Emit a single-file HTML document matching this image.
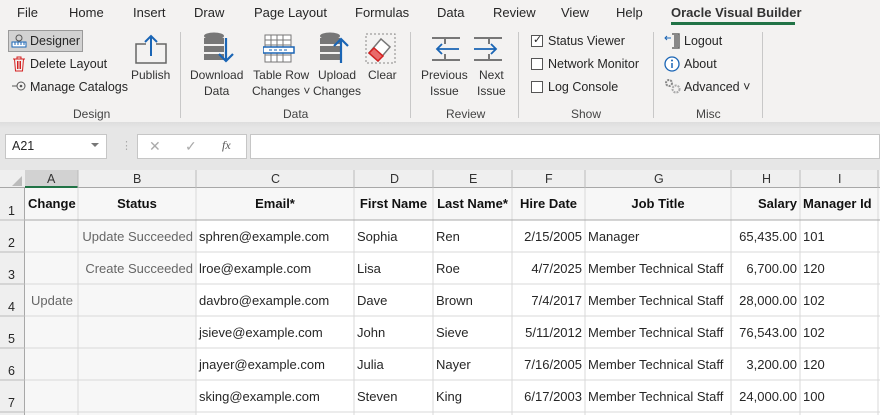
<!DOCTYPE html>
<html><head><meta charset="utf-8"><style>
*{margin:0;padding:0;box-sizing:border-box}
body{width:880px;height:415px;overflow:hidden;background:#e6e6e6;font-family:"Liberation Sans",sans-serif;font-size:12.5px;color:#262626;position:relative}
.a{position:absolute;white-space:nowrap}
.tab{top:5px;font-size:13px;color:#262626}
.lbl{font-size:12px;color:#333;text-align:center;line-height:16px}
.grp{font-size:12px;color:#444;top:107px}
.sep{position:absolute;top:32px;width:1px;height:86px;background:#c8c8c8}
.cb{position:absolute;width:12px;height:12px;border:1px solid #555;background:#fff}
.cell{position:absolute;font-size:13px;line-height:32px;overflow:hidden;white-space:nowrap;padding:0 3px;top:1px}
</style></head><body>
<!-- ribbon -->
<div class="a" style="left:0;top:0;width:880px;height:122px;background:#f3f2f1"></div>
<div class="a" style="left:0;top:122px;width:880px;height:6px;background:linear-gradient(#ddd,#e6e6e6)"></div>
<div class="a tab" style="left:17px">File</div>
<div class="a tab" style="left:69px">Home</div>
<div class="a tab" style="left:133px">Insert</div>
<div class="a tab" style="left:194px">Draw</div>
<div class="a tab" style="left:254px">Page Layout</div>
<div class="a tab" style="left:355px">Formulas</div>
<div class="a tab" style="left:437px">Data</div>
<div class="a tab" style="left:493px">Review</div>
<div class="a tab" style="left:561px">View</div>
<div class="a tab" style="left:616px">Help</div>
<div class="a tab" style="left:671px;font-weight:bold;color:#333">Oracle Visual Builder</div>
<div class="a" style="left:671px;top:22px;width:124px;height:3px;background:#217346"></div>

<!-- Design group -->
<div class="a" style="left:8px;top:30px;width:75px;height:22px;background:#d2d2d2;border:1px solid #9a9a9a"></div>
<svg class="a" style="left:11px;top:33px" width="16" height="16"><circle cx="8" cy="5" r="3" fill="none" stroke="#555"/><rect x="1" y="9" width="14" height="5" fill="#fff" stroke="#1a65b5"/><path d="M4 9v3M7 9v3M10 9v3M13 9v3" stroke="#1a65b5"/></svg>
<div class="a" style="left:30px;top:34px;font-size:12.5px">Designer</div>
<svg class="a" style="left:12px;top:56px" width="14" height="16"><path d="M1 3h12M5 3V1h4v2M2.5 3l1 12h7l1-12M5.5 5v8M7 5v8M8.5 5v8" stroke="#d42020" fill="none"/></svg>
<div class="a" style="left:30px;top:57px">Delete Layout</div>
<svg class="a" style="left:11px;top:80px" width="18" height="12"><circle cx="10" cy="6" r="4" fill="none" stroke="#555"/><circle cx="10" cy="6" r="1.3" fill="#555"/><path d="M1 6h5" stroke="#555"/></svg>
<div class="a" style="left:30px;top:80px">Manage Catalogs</div>
<svg class="a" style="left:135px;top:34px" width="32" height="30"><path d="M11 10H1v19h30V10H21" fill="none" stroke="#666" stroke-width="1.5"/><path d="M16 22V2M10 8l6-6 6 6" fill="none" stroke="#1a65b5" stroke-width="2"/></svg>
<div class="a lbl" style="left:131px;top:67px">Publish</div>
<div class="a grp" style="left:73px">Design</div>
<div class="sep" style="left:180px"></div>

<!-- Data group -->
<svg class="a" style="left:202px;top:32px" width="34" height="32"><ellipse cx="12" cy="4" rx="10" ry="3.5" fill="#777"/><rect x="2" y="6" width="20" height="6" fill="#777"/><rect x="2" y="14" width="20" height="6" fill="#777"/><rect x="2" y="22" width="20" height="6" fill="#777"/><path d="M24 6v22M17 22l7 7 7-7" fill="none" stroke="#1a65b5" stroke-width="2.2"/></svg>
<div class="a lbl" style="left:190px;top:67px">Download<br>Data</div>
<svg class="a" style="left:263px;top:34px" width="32" height="30"><rect x="2" y="1" width="26" height="27" fill="#fff" stroke="#777"/><path d="M2 6h26M2 11h26M2 21h26M8 1v27M14 1v27M20 1v27" stroke="#777"/><rect x="0" y="13" width="31" height="6" fill="#fff" stroke="#1a65b5" stroke-width="1.5"/><path d="M6 16h20" stroke="#1a65b5" stroke-dasharray="3 2"/></svg>
<div class="a lbl" style="left:252px;top:67px">Table Row<br>Changes ˅</div>
<svg class="a" style="left:318px;top:32px" width="34" height="32"><ellipse cx="12" cy="4" rx="10" ry="3.5" fill="#777"/><rect x="2" y="6" width="20" height="6" fill="#777"/><rect x="2" y="14" width="20" height="6" fill="#777"/><rect x="2" y="22" width="20" height="6" fill="#777"/><path d="M23 31V7M16 14l7-7 7 7" fill="none" stroke="#1a65b5" stroke-width="2.2"/></svg>
<div class="a lbl" style="left:313px;top:67px">Upload<br>Changes</div>
<svg class="a" style="left:365px;top:33px" width="32" height="32"><rect x="1" y="1" width="29" height="29" fill="none" stroke="#888" stroke-dasharray="2 2"/><path d="M4 20l12-14 9 8-12 14z" fill="#fff" stroke="#777" stroke-width="1.5"/><path d="M4 20l5-5 9 8-5 5z" fill="#e86a6a" stroke="#d42020" stroke-width="1.5"/></svg>
<div class="a lbl" style="left:368px;top:67px">Clear</div>
<div class="a grp" style="left:283px">Data</div>
<div class="sep" style="left:410px"></div>

<!-- Review -->
<svg class="a" style="left:431px;top:37px" width="30" height="24"><path d="M1 1h28M1 23h28M14 1v6M14 17v6" stroke="#777" stroke-width="2"/><path d="M28 12H6M11 7l-5 5 5 5" fill="none" stroke="#1a65b5" stroke-width="1.8"/></svg>
<div class="a lbl" style="left:421px;top:67px">Previous<br>Issue</div>
<svg class="a" style="left:473px;top:37px" width="30" height="24"><path d="M1 1h28M1 23h28M16 1v6M16 17v6" stroke="#777" stroke-width="2"/><path d="M1 12h22M18 7l5 5-5 5" fill="none" stroke="#1a65b5" stroke-width="1.8"/></svg>
<div class="a lbl" style="left:477px;top:67px">Next<br>Issue</div>
<div class="a grp" style="left:446px">Review</div>
<div class="sep" style="left:518px"></div>

<!-- Show -->
<div class="cb" style="left:531px;top:35px"></div>
<div class="a" style="left:533px;top:33px;font-size:11px">✓</div>
<div class="a" style="left:548px;top:34px">Status Viewer</div>
<div class="cb" style="left:531px;top:58px"></div>
<div class="a" style="left:548px;top:57px">Network Monitor</div>
<div class="cb" style="left:531px;top:81px"></div>
<div class="a" style="left:548px;top:80px">Log Console</div>
<div class="a grp" style="left:571px">Show</div>
<div class="sep" style="left:653px"></div>

<!-- Misc -->
<svg class="a" style="left:664px;top:33px" width="18" height="16"><path d="M8 1h7v14H8" fill="none" stroke="#666" stroke-width="1.5"/><rect x="10" y="2" width="4" height="12" fill="#888"/><path d="M7 5H1M3 3L1 5l2 2" fill="none" stroke="#1a65b5"/></svg>
<div class="a" style="left:684px;top:34px">Logout</div>
<svg class="a" style="left:664px;top:56px" width="16" height="16"><circle cx="8" cy="8" r="7" fill="#fff" stroke="#1a65b5" stroke-width="1.3"/><path d="M8 7v5" stroke="#1a65b5" stroke-width="1.5"/><circle cx="8" cy="4.5" r="1" fill="#1a65b5"/></svg>
<div class="a" style="left:684px;top:57px">About</div>
<svg class="a" style="left:664px;top:78px" width="18" height="16"><circle cx="5" cy="5" r="3" fill="none" stroke="#888" stroke-width="2" stroke-dasharray="2 1"/><circle cx="12" cy="11" r="3.5" fill="none" stroke="#aaa" stroke-width="2" stroke-dasharray="2 1"/></svg>
<div class="a" style="left:684px;top:80px">Advanced ˅</div>
<div class="a grp" style="left:696px">Misc</div>
<div class="sep" style="left:762px"></div>

<!-- formula bar -->
<div class="a" style="left:5px;top:134px;width:102px;height:25px;background:#fff;border:1px solid #c6c6c6"></div>
<div class="a" style="left:12px;top:139px;font-size:12.5px">A21</div>
<div class="a" style="left:91px;top:143px;width:0;height:0;border-left:4px solid transparent;border-right:4px solid transparent;border-top:4px solid #777"></div>
<div class="a" style="left:121px;top:139px;color:#aaa;font-size:11px">⋮</div>
<div class="a" style="left:137px;top:134px;width:110px;height:25px;background:#fff;border:1px solid #c6c6c6"></div>
<div class="a" style="left:149px;top:138px;color:#aaa;font-size:14px">✕</div>
<div class="a" style="left:185px;top:138px;color:#aaa;font-size:14px">✓</div>
<div class="a" style="left:222px;top:138px;color:#555;font-size:12px;font-style:italic;font-family:'Liberation Serif',serif">fx</div>
<div class="a" style="left:250px;top:134px;width:630px;height:25px;background:#fff;border:1px solid #c6c6c6"></div>

<!-- grid -->
<div class="a" style="left:0;top:170px;width:880px;height:18px;background:#efefef;border-bottom:1px solid #a8a8a8"></div>
<div class="a" style="left:25px;top:170px;width:53px;height:18px;background:#d2d2d2;border-bottom:2px solid #217346"></div>
<div class="a" style="left:12px;top:176px;width:0;height:0;border-left:10px solid transparent;border-bottom:10px solid #bbb"></div>
<div class="a" style="left:0;top:188px;width:25px;height:227px;background:#efefef;border-right:1px solid #a8a8a8"></div>
<div class="a" style="left:25px;top:188px;width:855px;height:227px;background:#fff"></div>
<div class="a" style="left:25px;top:188px;width:855px;height:32px;background:#f7f7f7"></div>
<div class="a" style="left:25px;top:220px;width:171px;height:195px;background:#f7f7f7"></div>
<svg class="a" style="left:0;top:170px" width="880" height="245">
<g stroke="#d9d9d9">
<path d="M78 18V245M196 18V245M354 18V245M433 18V245M512 18V245M585 18V245M731 18V245M800 18V245M878 18V245"/>
<path d="M25 82H880M25 114H880M25 146H880M25 178H880M25 210H880M25 242H880"/>
</g>
<path d="M25 50H880" stroke="#a8a8a8"/>
<g stroke="#bbb"><path d="M78 0v18M196 0v18M354 0v18M433 0v18M512 0v18M585 0v18M731 0v18M800 0v18M878 0v18"/>
<path d="M0 50h25M0 82h25M0 114h25M0 146h25M0 178h25M0 210h25M0 242h25"/></g>
</svg>
<div class="a" style="top:172px;left:0;width:880px;font-size:12.5px;color:#333">
<span class="a" style="left:47px">A</span><span class="a" style="left:133px">B</span><span class="a" style="left:271px">C</span><span class="a" style="left:390px">D</span><span class="a" style="left:469px">E</span><span class="a" style="left:545px">F</span><span class="a" style="left:654px">G</span><span class="a" style="left:762px">H</span><span class="a" style="left:838px">I</span>
</div>
<div class="a" style="left:8px;top:204px;font-size:12.5px">1</div>
<div class="a" style="left:8px;top:236px;font-size:12.5px">2</div>
<div class="a" style="left:8px;top:268px;font-size:12.5px">3</div>
<div class="a" style="left:8px;top:300px;font-size:12.5px">4</div>
<div class="a" style="left:8px;top:332px;font-size:12.5px">5</div>
<div class="a" style="left:8px;top:364px;font-size:12.5px">6</div>
<div class="a" style="left:8px;top:396px;font-size:12.5px">7</div>

<div style="position:absolute;left:0;top:188px;width:880px;height:32px;font-weight:bold;color:#111">
<div class="cell" style="left:25px;top:0;width:53px;text-align:center">Change</div>
<div class="cell" style="left:78px;top:0;width:118px;text-align:center">Status</div>
<div class="cell" style="left:196px;top:0;width:158px;text-align:center">Email*</div>
<div class="cell" style="left:354px;top:0;width:79px;text-align:center">First Name</div>
<div class="cell" style="left:433px;top:0;width:79px;text-align:center">Last Name*</div>
<div class="cell" style="left:512px;top:0;width:73px;text-align:center">Hire Date</div>
<div class="cell" style="left:585px;top:0;width:146px;text-align:center">Job Title</div>
<div class="cell" style="left:731px;top:0;width:69px;text-align:right">Salary</div>
<div class="cell" style="left:800px;top:0;width:78px">Manager Id</div>
</div>

<div style="position:absolute;left:0;top:220px;width:880px;height:32px">
<div class="cell" style="left:78px;width:118px;text-align:right;color:#666">Update Succeeded</div>
<div class="cell" style="left:196px">sphren@example.com</div><div class="cell" style="left:354px">Sophia</div><div class="cell" style="left:433px">Ren</div>
<div class="cell" style="left:512px;width:73px;text-align:right">2/15/2005</div><div class="cell" style="left:585px">Manager</div>
<div class="cell" style="left:731px;width:69px;text-align:right">65,435.00</div><div class="cell" style="left:800px">101</div></div>
<div style="position:absolute;left:0;top:252px;width:880px;height:32px">
<div class="cell" style="left:78px;width:118px;text-align:right;color:#666">Create Succeeded</div>
<div class="cell" style="left:196px">lroe@example.com</div><div class="cell" style="left:354px">Lisa</div><div class="cell" style="left:433px">Roe</div>
<div class="cell" style="left:512px;width:73px;text-align:right">4/7/2025</div><div class="cell" style="left:585px">Member Technical Staff</div>
<div class="cell" style="left:731px;width:69px;text-align:right">6,700.00</div><div class="cell" style="left:800px">120</div></div>
<div style="position:absolute;left:0;top:284px;width:880px;height:32px">
<div class="cell" style="left:28px;color:#666">Update</div>
<div class="cell" style="left:196px">davbro@example.com</div><div class="cell" style="left:354px">Dave</div><div class="cell" style="left:433px">Brown</div>
<div class="cell" style="left:512px;width:73px;text-align:right">7/4/2017</div><div class="cell" style="left:585px">Member Technical Staff</div>
<div class="cell" style="left:731px;width:69px;text-align:right">28,000.00</div><div class="cell" style="left:800px">102</div></div>
<div style="position:absolute;left:0;top:316px;width:880px;height:32px">
<div class="cell" style="left:196px">jsieve@example.com</div><div class="cell" style="left:354px">John</div><div class="cell" style="left:433px">Sieve</div>
<div class="cell" style="left:512px;width:73px;text-align:right">5/11/2012</div><div class="cell" style="left:585px">Member Technical Staff</div>
<div class="cell" style="left:731px;width:69px;text-align:right">76,543.00</div><div class="cell" style="left:800px">102</div></div>
<div style="position:absolute;left:0;top:348px;width:880px;height:32px">
<div class="cell" style="left:196px">jnayer@example.com</div><div class="cell" style="left:354px">Julia</div><div class="cell" style="left:433px">Nayer</div>
<div class="cell" style="left:512px;width:73px;text-align:right">7/16/2005</div><div class="cell" style="left:585px">Member Technical Staff</div>
<div class="cell" style="left:731px;width:69px;text-align:right">3,200.00</div><div class="cell" style="left:800px">120</div></div>
<div style="position:absolute;left:0;top:380px;width:880px;height:32px">
<div class="cell" style="left:196px">sking@example.com</div><div class="cell" style="left:354px">Steven</div><div class="cell" style="left:433px">King</div>
<div class="cell" style="left:512px;width:73px;text-align:right">6/17/2003</div><div class="cell" style="left:585px">Member Technical Staff</div>
<div class="cell" style="left:731px;width:69px;text-align:right">24,000.00</div><div class="cell" style="left:800px">100</div></div>
</body></html>
